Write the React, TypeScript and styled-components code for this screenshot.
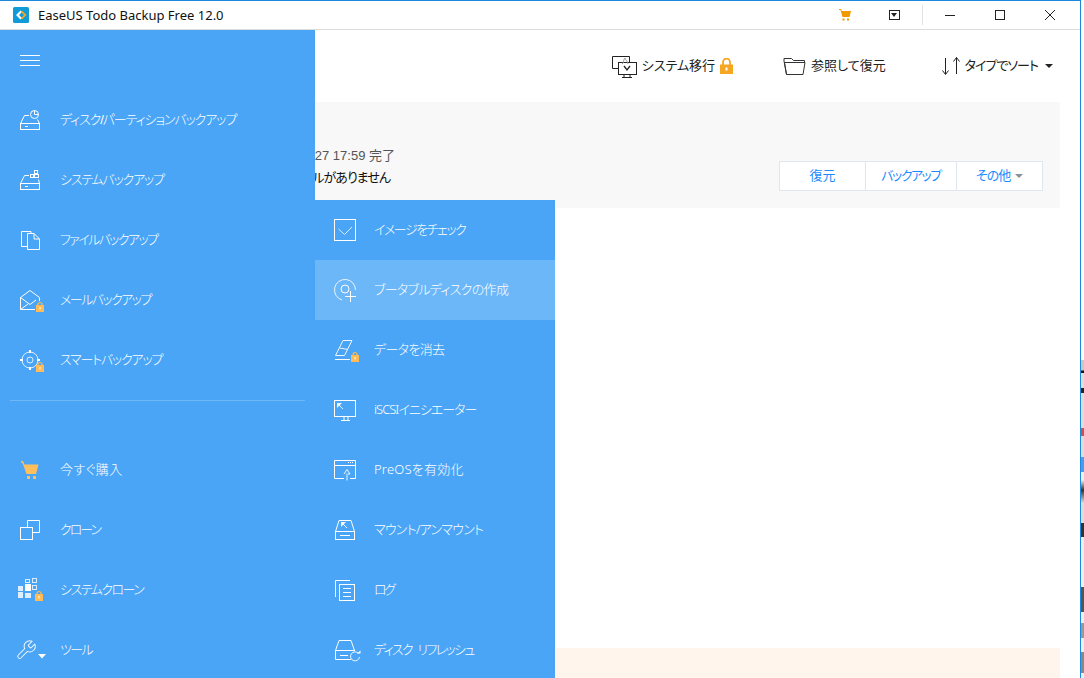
import React from "react";
import styled, { createGlobalStyle } from "styled-components";

const GlobalStyle = createGlobalStyle`
  html, body { margin: 0; padding: 0; background: #fff; overflow: hidden; }
  body {
    font-family: "Liberation Sans", "Noto Sans CJK JP", sans-serif;
    font-size: 13px;
    font-feature-settings: "palt";
  }
`;

const Lock = ({ x = 22, y = 18 }: { x?: number; y?: number }) => (
  <g transform={`translate(${x} ${y})`}>
    <path d="M2 4V2.500a2 2 0 0 1 4 0V4" fill="none" stroke="#ffbb55" strokeWidth="1.200" />
    <rect x="0" y="3" width="8" height="7" fill="#ffbb55" stroke="none" />
    <rect x="3.500" y="5" width="1" height="2.500" fill="#fff" stroke="none" />
  </g>
);

const menuIcons: Record<string, React.ReactNode> = {
  diskPie: (
    <>
      <rect x="6.5" y="19.5" width="19" height="6" />
      <path d="M6.5 19.5L10.5 11.5H15M25.5 19.5L23.5 15.5M11 22.5h3" />
      <circle cx="20.5" cy="10.5" r="4" />
      <path d="M20.5 6.5v4h4" />
    </>
  ),
  diskGrid: (
    <>
      <rect x="6.5" y="19.5" width="19" height="6" />
      <path d="M6.5 19.5L10.5 11.5H15M25.5 19.5L24.5 15.5M11 22.5h3" />
      <rect x="20.5" y="6.5" width="3" height="3" />
      <rect x="16.5" y="10.5" width="3" height="3" />
      <rect x="20.5" y="10.5" width="4" height="3" />
    </>
  ),
  files: (
    <>
      <path d="M13.5 22.5H7.5V7.5H17V9.5" />
      <path d="M13.5 9.5H20L25.5 15V25.5H13.5ZM20 9.5V15H25.5" />
    </>
  ),
  mail: (
    <>
      <path d="M6.5 25.5V13.5L16 6.5L25.5 13.5V17" />
      <path d="M6.5 13.5L16 20.5L22 16M6.5 25.5L14 20M6.5 25.5H21" />
      <Lock />
    </>
  ),
  target: (
    <>
      <circle cx="16" cy="16" r="8" opacity=".8" />
      <circle cx="16" cy="16" r="3" opacity=".8" />
      <path d="M16 6v3M16 23v3M6 16h3M23 16h3" strokeWidth="2" />
      <Lock x={22} y={18} />
    </>
  ),
  cart: (
    <g fill="#ffbf5e" stroke="none">
      <path d="M7 7h2l1.500 3.500H24.500L22 20H12.500L9.500 11.500L8 8.500H7Z" />
      <rect x="13" y="22" width="3" height="3" />
      <rect x="19" y="22" width="3" height="3" />
    </g>
  ),
  clone: (
    <>
      <rect x="6.5" y="13.500" width="12" height="12" />
      <path d="M13.500 13V6.500H25.500V18.500H19" />
    </>
  ),
  windows: (
    <>
      <g fill="#dfeffd" stroke="none">
        <rect x="4" y="12" width="5" height="5" />
        <rect x="11" y="10" width="6" height="7" fill="#fff" />
        <rect x="4" y="18" width="5" height="6" />
        <rect x="11" y="19" width="6" height="5" />
      </g>
      <g opacity=".8">
        <rect x="11.500" y="5.500" width="4" height="3" />
        <rect x="18.500" y="4.500" width="4" height="4" />
        <rect x="18.500" y="11.500" width="4" height="4" />
      </g>
      <Lock x={21} y={17} />
    </>
  ),
  wrench: (
    <>
      <g transform="translate(1 5) scale(.92)" strokeWidth="1.100" opacity=".9">
        <path d="M14.700 6.300a1 1 0 0 0 0 1.400l1.600 1.600a1 1 0 0 0 1.400 0l3.770-3.770a6 6 0 0 1-7.940 7.940l-6.910 6.910a2.120 2.120 0 0 1-3-3l6.910-6.910a6 6 0 0 1 7.940-7.940l-3.760 3.760z" />
      </g>
      <path d="M24 20h8l-4 4.500Z" fill="#fff" stroke="none" />
    </>
  ),
  check: (
    <>
      <rect x="5.500" y="5.500" width="21" height="21" />
      <path d="M9.500 15L15.500 20.500L23 13" opacity=".8" />
    </>
  ),
  bootDisk: (
    <>
      <path d="M13 26A10.500 10.500 0 1 1 26.500 16" opacity=".85" />
      <circle cx="16" cy="15" r="4" />
      <path d="M21.500 17v11M16 22.500h11" />
    </>
  ),
  erase: (
    <>
      <path d="M14 6.500H23L15.500 21.500H6.500ZM10.500 14L19 15.500" opacity=".9" />
      <path d="M6 25.500H21" />
      <Lock />
    </>
  ),
  monitor: (
    <>
      <rect x="5.500" y="6.500" width="21" height="16" />
      <path d="M15 23v3M19 23v3M12 26.500h9" />
      <path d="M14 15L9 10" opacity=".9" />
      <path d="M8 9h5l-5 5Z" fill="#fff" stroke="none" opacity=".9" />
    </>
  ),
  preos: (
    <>
      <path d="M15 24.500H5.500V6.500H26.500V24.500H21M5.500 11.500H26.500" />
      <path d="M19 8.500h6" strokeDasharray="1 1" />
      <path d="M18 26.500V19.500M15 20L18 15.500L21 20H19" opacity=".9" />
    </>
  ),
  mount: (
    <>
      <rect x="6.500" y="17.500" width="19" height="8" />
      <path d="M6.500 17.500L10 6.500H22L25.500 17.500M11 21.500h10" />
      <path d="M18 14L13 9" opacity=".9" />
      <path d="M12 8h5l-5 5Z" fill="#fff" stroke="none" opacity=".9" />
    </>
  ),
  log: (
    <>
      <rect x="10.500" y="10.500" width="15" height="16" />
      <path d="M6.500 23V6.500H21M14 14.500h8M14 18.500h8M14 22.500h8" />
    </>
  ),
  diskRefresh: (
    <>
      <path d="M22 25.500H6.500V16.500H26M6.500 16.500L10 6.500H22L25.500 16.500M11 21.500h8" />
      <path d="M29.500 19.500A4.500 4.500 0 1 0 30.500 23" opacity=".9" />
      <path d="M28 19.500h3.500v-3Z" fill="#fff" stroke="none" />
    </>
  ),
};

const mainMenu = [
  { icon: "diskPie", label: "ディスク/パーティションバックアップ", track: -1.1 },
  { icon: "diskGrid", label: "システムバックアップ", track: -1.2 },
  { icon: "files", label: "ファイルバックアップ", track: -1.6 },
  { icon: "mail", label: "メールバックアップ", track: -1.55 },
  { icon: "target", label: "スマートバックアップ", track: -1.2 },
];

const lowerMenu = [
  { icon: "cart", label: "今すぐ購入", track: 0.4 },
  { icon: "clone", label: "クローン", track: -2 },
  { icon: "windows", label: "システムクローン", track: -1.5 },
  { icon: "wrench", label: "ツール", track: -1.7 },
];

const toolsMenu = [
  { icon: "check", label: "イメージをチェック", track: -1.45 },
  { icon: "bootDisk", label: "ブータブルディスクの作成", track: -0.67, active: true },
  { icon: "erase", label: "データを消去", track: -0.67 },
  { icon: "monitor", label: "iSCSIイニシエーター", track: -1 },
  { icon: "preos", label: "PreOSを有効化", track: 0.2 },
  { icon: "mount", label: "マウント/アンマウント", track: -0.75 },
  { icon: "log", label: "ログ", track: -2.5 },
  { icon: "diskRefresh", label: "ディスク リフレッシュ", track: -1.7 },
];

export default function App() {
  return (
    <Screen>
      <GlobalStyle />
      <Window>
        <TitleBar>
          <AppLogo viewBox="0 0 16 16">
            <rect width="16" height="16" rx="1.500" fill="#0f9bd6" />
            <path d="M7.500 3.500L3 8l4.500 4.500L9 11 6 8l3-3Z" fill="#fff" />
            <path d="M9.500 5L12.500 8l-3 3 1.200 1.200L15 8l-4.300-4.200Z" fill="#f6a623" transform="translate(-1.500 0)" />
          </AppLogo>
          <AppTitle>EaseUS Todo Backup Free 12.0</AppTitle>
          <TitleActions>
            <TitleIcon viewBox="0 0 14 14" width="14" height="14">
              <path d="M1 1h2l.8 2H13l-1.500 6H4.500L2.500 2H1Z" fill="#f09a00" />
              <rect x="4.500" y="10.500" width="2" height="2" fill="#f09a00" />
              <rect x="9" y="10.500" width="2" height="2" fill="#f09a00" />
            </TitleIcon>
            <DropBox />
            <TitleDivider />
            <WindowButton>
              <svg width="12" height="12" viewBox="0 0 12 12">
                <path d="M1 6.500h10" stroke="#222" fill="none" />
              </svg>
            </WindowButton>
            <WindowButton>
              <svg width="12" height="12" viewBox="0 0 12 12">
                <rect x="1.500" y="1.500" width="9" height="9" stroke="#222" fill="none" />
              </svg>
            </WindowButton>
            <WindowButton>
              <svg width="12" height="12" viewBox="0 0 12 12">
                <path d="M1 1l10 10M11 1L1 11" stroke="#222" fill="none" />
              </svg>
            </WindowButton>
          </TitleActions>
        </TitleBar>

        <Main>
          <Toolbar>
            <ToolButton>
              <svg width="26" height="24" viewBox="0 0 26 24" fill="none" stroke="#222">
                <path d="M7.500 14.500H1.500V2.500H18.500V8.500" />
                <rect x="7.500" y="8.500" width="18" height="12" fill="#fff" />
                <path d="M13 21v2M19 21v2M11 23.500h10" />
                <path d="M11 10c2-1 1-4 3-6 0 2 3 3 3 6" stroke="#999" />
                <path d="M13 12l3 4 3-4" strokeWidth="1.300" />
              </svg>
              <Label>システム移行</Label>
              <svg width="13" height="16" viewBox="0 0 13 16">
                <path d="M3 7V4a3.500 3.500 0 0 1 7 0v3" fill="none" stroke="#f5a623" strokeWidth="1.800" />
                <rect y="6.500" width="13" height="9.500" fill="#f5a623" />
                <rect x="5.500" y="9.500" width="2" height="3" fill="#fff" />
              </svg>
            </ToolButton>
            <ToolButton>
              <svg width="23" height="20" viewBox="0 0 23 20" fill="none" stroke="#333">
                <path d="M3.500 18.500L1 5V2.500H8.500L10.500 4.500H21.500V7" />
                <path d="M1.500 6.500H22L20 18.500H3.500Z" />
              </svg>
              <Label>参照して復元</Label>
            </ToolButton>
            <ToolButton $offset={6}>
              <svg width="18" height="20" viewBox="0 0 18 20" fill="none" stroke="#222">
                <path d="M3.500 2v16M.5 14.500l3 4 3-4M14.500 18V1.500M11.500 5.500l3-4 3 4" />
              </svg>
              <Label $track={-1}>タイプでソート</Label>
              <Caret $color="#222" />
            </ToolButton>
          </Toolbar>

          <BackupCard>
            <StatusText>
              <StatusTime>2019-10-27 17:59 完了</StatusTime>
              <StatusNote>スケジュールがありません</StatusNote>
            </StatusText>
            <ActionGroup>
              <ActionButton $width={85}>
                <Label>復元</Label>
              </ActionButton>
              <ActionButton $width={91}>
                <Label $track={-1.5}>バックアップ</Label>
              </ActionButton>
              <ActionButton $width={86}>
                <Label $track={-1}>その他</Label>
                <Caret $color="#8a8f99" />
              </ActionButton>
            </ActionGroup>
          </BackupCard>

          <NoticeStrip />
        </Main>

        <Sidebar>
          <SidebarHeader>
            <Hamburger>
              <span />
              <span />
              <span />
            </Hamburger>
          </SidebarHeader>
          {mainMenu.map((item) => (
            <MenuRow key={item.icon}>
              <MenuIcon viewBox="0 0 32 32">{menuIcons[item.icon]}</MenuIcon>
              <Label $track={item.track}>{item.label}</Label>
            </MenuRow>
          ))}
          <SidebarDivider />
          {lowerMenu.map((item) => (
            <MenuRow key={item.icon}>
              <MenuIcon viewBox="0 0 32 32">{menuIcons[item.icon]}</MenuIcon>
              <Label $track={item.track}>{item.label}</Label>
            </MenuRow>
          ))}
        </Sidebar>

        <Flyout>
          {toolsMenu.map((item) => (
            <FlyoutRow key={item.icon} $active={item.active}>
              <MenuIcon viewBox="0 0 32 32">{menuIcons[item.icon]}</MenuIcon>
              <Label $track={item.track}>{item.label}</Label>
            </FlyoutRow>
          ))}
        </Flyout>
      </Window>
      <DesktopEdge />
    </Screen>
  );
}

const Screen = styled.div`
  display: flex;
  width: 1084px;
  height: 678px;
  overflow: hidden;
  background: #fff;
`;

const Window = styled.div`
  position: relative;
  display: flex;
  flex-direction: column;
  width: 1081px;
  height: 678px;
  box-sizing: border-box;
  overflow: hidden;
  border-top: 1px solid #1e88dc;
  border-right: 1px solid #1e88dc;
  color: #222;
`;

const DesktopEdge = styled.div`
  width: 3px;
  background: linear-gradient(
    to bottom,
    #fff 0 360px,
    #c8c8c8 360px 370px,
    #111 371px 373px,
    #ddd 373px 388px,
    #222 388px 393px,
    #ddd 393px 428px,
    #d05050 428px 436px,
    #ddd 436px 457px,
    #4a9af0 457px 472px,
    #eee 472px 480px,
    #333 490px,
    #ddd 503px 523px,
    #333 523px 537px,
    #eee 537px 587px,
    #555 587px 612px,
    #eee 612px 623px,
    #999 623px 638px,
    #eee 638px 652px,
    #888 652px 673px,
    #eee 673px
  );
`;

const Label = styled.span<{ $track?: number }>`
  padding-bottom: 4px;
  letter-spacing: ${(p) => p.$track ?? 0}px;
  word-spacing: 4px;
  white-space: nowrap;
`;

const TitleBar = styled.div`
  display: flex;
  align-items: center;
  flex: none;
  height: 29px;
  box-sizing: border-box;
  padding-left: 13px;
  border-bottom: 1px solid #dcdcdc;
  background: #fff;
`;

const AppLogo = styled.svg`
  width: 16px;
  height: 16px;
  flex: none;
`;

const AppTitle = styled.div`
  margin-left: 9px;
  font-family: "Noto Sans", "Liberation Sans", sans-serif;
  font-size: 13px;
  color: #111;
`;

const TitleActions = styled.div`
  display: flex;
  align-items: center;
  margin-left: auto;
  padding-right: 5px;
`;

const TitleIcon = styled.svg`
  margin-right: 37px;
`;

const DropBox = styled.div`
  position: relative;
  width: 9px;
  height: 8px;
  margin-right: 22px;
  border: 1px solid #222;

  &::after {
    content: "";
    position: absolute;
    left: 1px;
    top: 2px;
    border-left: 3.5px solid transparent;
    border-right: 3.5px solid transparent;
    border-top: 4px solid #222;
  }
`;

const TitleDivider = styled.div`
  width: 1px;
  height: 20px;
  margin-right: 2px;
  background: #e2e2e2;
`;

const WindowButton = styled.div`
  display: flex;
  align-items: center;
  justify-content: center;
  width: 50px;
  height: 28px;
`;

const Main = styled.div`
  display: flex;
  flex: 1;
  flex-direction: column;
  min-height: 0;
  padding: 0 20px 0 60px;
`;

const Toolbar = styled.div`
  display: flex;
  align-items: center;
  justify-content: flex-end;
  flex: none;
  gap: 50px;
  height: 72px;
  padding-right: 7px;
`;

const ToolButton = styled.div<{ $offset?: number }>`
  display: flex;
  align-items: center;
  gap: 5px;
  margin-left: ${(p) => p.$offset ?? 0}px;
  color: #222;
  white-space: nowrap;
`;

const Caret = styled.i<{ $color: string }>`
  display: inline-block;
  margin-left: 2px;
  border-left: 4px solid transparent;
  border-right: 4px solid transparent;
  border-top: 4px solid ${(p) => p.$color};
`;

const BackupCard = styled.div`
  display: flex;
  align-items: flex-end;
  justify-content: space-between;
  flex: none;
  height: 106px;
  box-sizing: border-box;
  padding: 0 17px 17px 0;
  background: #f8f8f8;
`;

const StatusText = styled.div`
  width: 335px;
  margin-bottom: 2px;
  line-height: 22px;
  text-align: right;
  white-space: nowrap;
`;

const StatusTime = styled.div`
  color: #555;
`;

const StatusNote = styled.div`
  padding-right: 5px;
  letter-spacing: -1px;
  color: #111;
`;

const ActionGroup = styled.div`
  display: flex;
  height: 30px;
  box-sizing: border-box;
  border: 1px solid #e1e5ee;
  background: #fff;
`;

const ActionButton = styled.div<{ $width: number }>`
  display: flex;
  align-items: center;
  justify-content: center;
  gap: 3px;
  width: ${(p) => p.$width}px;
  box-sizing: border-box;
  color: #1a8cff;

  & + & {
    border-left: 1px solid #e1e5ee;
  }
`;

const NoticeStrip = styled.div`
  flex: none;
  height: 30px;
  margin-top: auto;
  background: #fff5ec;
`;

const Sidebar = styled.nav`
  position: absolute;
  top: 29px;
  left: 0;
  bottom: 0;
  width: 315px;
  background: #4aa5f6;
  color: #fff;
  font-weight: 300;
`;

const SidebarHeader = styled.div`
  display: flex;
  align-items: center;
  height: 60px;
  padding-left: 20px;
`;

const Hamburger = styled.div`
  display: flex;
  flex-direction: column;
  gap: 4px;
  width: 20px;

  span {
    height: 1px;
    background: #fff;
  }
`;

const MenuRow = styled.div`
  display: flex;
  align-items: center;
  gap: 14px;
  height: 60px;
  padding-left: 14px;
`;

const MenuIcon = styled.svg`
  flex: none;
  width: 32px;
  height: 32px;
  overflow: visible;
  fill: none;
  stroke: #fff;
  stroke-width: 1;
`;

const SidebarDivider = styled.div`
  height: 1px;
  margin: 10px 10px 39px;
  background: #6fb8f8;
`;

const Flyout = styled.div`
  position: absolute;
  top: 199px;
  left: 315px;
  bottom: 0;
  width: 240px;
  background: #4aa5f6;
  color: #fff;
  font-family: "Noto Sans", "Noto Sans CJK JP", sans-serif;
  font-weight: 300;
`;

const FlyoutRow = styled.div<{ $active?: boolean }>`
  display: flex;
  align-items: center;
  gap: 13px;
  height: 60px;
  padding-left: 14px;
  background: ${(p) => (p.$active ? "#6cb7f8" : "transparent")};
`;
